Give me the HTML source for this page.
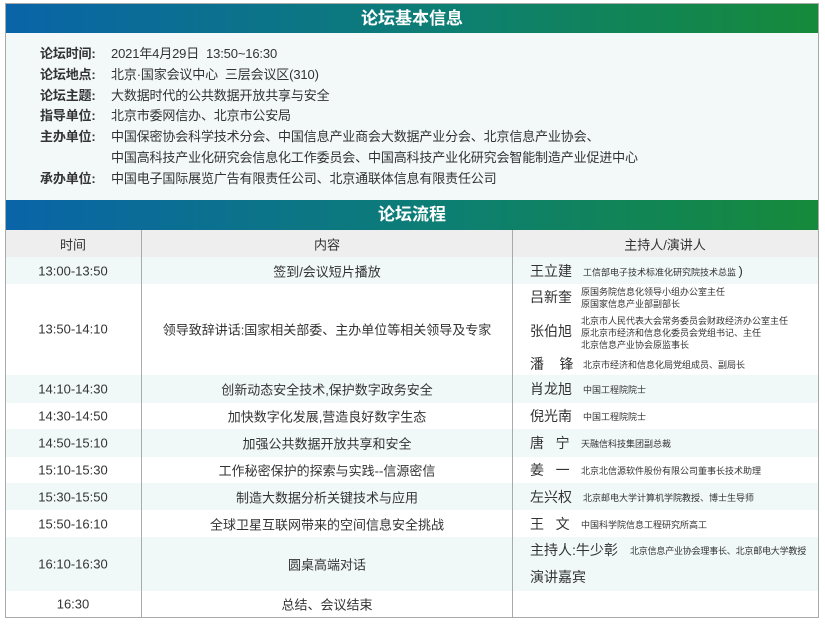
<!DOCTYPE html>
<html><head><meta charset="utf-8"><style>
*{margin:0;padding:0;box-sizing:border-box}
body{width:825px;height:626px;background:#fff;font-family:"Liberation Sans","Noto Sans CJK SC",sans-serif;color:#333;position:relative;overflow:hidden}
.frame{position:absolute;left:5px;top:3px;width:814px;height:615px;border:1px solid #aaa;background:#fff}
.bar{position:absolute;left:6px;width:812px;background:linear-gradient(90deg,#0a64a8,#0d7f72 55%,#168a3a);color:#fff;font-weight:bold;font-size:17px;text-align:center}
.info{position:absolute;left:6px;top:33px;width:812px;height:167px;background:#f3f9f9}
.l{position:absolute;font-size:13px;white-space:nowrap;letter-spacing:-0.15px}
.lb{font-weight:bold;left:40px}
.v{left:111px}
.row{position:absolute;left:6px;width:812px}
.a{background:#f1f8f8}
.c{position:absolute;font-size:13px;white-space:nowrap;transform:translate(-50%,-50%)}
.vl{position:absolute;top:230px;height:387px;width:1px;background:#aaa}
.n{position:absolute;left:530px;font-size:14px;white-space:nowrap;transform:translateY(-50%)}
.d{position:absolute;font-size:9px;white-space:nowrap;transform:translateY(-50%);line-height:12px}
</style></head><body>
<div class="frame"></div>
<div class="bar" style="top:4px;height:29px;line-height:29px">论坛基本信息</div>
<div class="info"></div>
<div class="l lb" style="top:43px">论坛时间:</div><div class="l v" style="top:43px">2021年4月29日&nbsp; 13:50~16:30</div>
<div class="l lb" style="top:64px">论坛地点:</div><div class="l v" style="top:64px">北京·国家会议中心&nbsp; 三层会议区(310)</div>
<div class="l lb" style="top:85px">论坛主题:</div><div class="l v" style="top:85px">大数据时代的公共数据开放共享与安全</div>
<div class="l lb" style="top:105px">指导单位:</div><div class="l v" style="top:105px">北京市委网信办、北京市公安局</div>
<div class="l lb" style="top:126px">主办单位:</div><div class="l v" style="top:126px">中国保密协会科学技术分会、中国信息产业商会大数据产业分会、北京信息产业协会、</div>
<div class="l v" style="top:147px">中国高科技产业化研究会信息化工作委员会、中国高科技产业化研究会智能制造产业促进中心</div>
<div class="l lb" style="top:168px">承办单位:</div><div class="l v" style="top:168px">中国电子国际展览广告有限责任公司、北京通联体信息有限责任公司</div>
<div class="bar" style="top:200px;height:30px;line-height:30px">论坛流程</div>
<div class="row" style="top:230px;height:27px;background:#eee"></div>
<div class="row a" style="top:257px;height:27px"></div>
<div class="row a" style="top:375px;height:28px"></div>
<div class="row a" style="top:429px;height:28px"></div>
<div class="row a" style="top:483px;height:27px"></div>
<div class="row a" style="top:537px;height:54px"></div>
<div class="vl" style="left:141px"></div><div class="vl" style="left:512px"></div>

<div class="c" style="left:73px;top:244px">时间</div><div class="c" style="left:327px;top:244px">内容</div><div class="c" style="left:665px;top:244px">主持人/演讲人</div>
<div class="c" style="left:73px;top:271px">13:00-13:50</div><div class="c" style="left:327px;top:271px">签到/会议短片播放</div>
<div class="c" style="left:73px;top:329px">13:50-14:10</div><div class="c" style="left:327px;top:329px">领导致辞讲话:国家相关部委、主办单位等相关领导及专家</div>
<div class="c" style="left:73px;top:389px">14:10-14:30</div><div class="c" style="left:327px;top:389px">创新动态安全技术,保护数字政务安全</div>
<div class="c" style="left:73px;top:416px">14:30-14:50</div><div class="c" style="left:327px;top:416px">加快数字化发展,营造良好数字生态</div>
<div class="c" style="left:73px;top:443px">14:50-15:10</div><div class="c" style="left:327px;top:443px">加强公共数据开放共享和安全</div>
<div class="c" style="left:73px;top:470px">15:10-15:30</div><div class="c" style="left:327px;top:470px">工作秘密保护的探索与实践--信源密信</div>
<div class="c" style="left:73px;top:497px">15:30-15:50</div><div class="c" style="left:327px;top:497px">制造大数据分析关键技术与应用</div>
<div class="c" style="left:73px;top:524px">15:50-16:10</div><div class="c" style="left:327px;top:524px">全球卫星互联网带来的空间信息安全挑战</div>
<div class="c" style="left:73px;top:564px">16:10-16:30</div><div class="c" style="left:327px;top:564px">圆桌高端对话</div>
<div class="c" style="left:73px;top:604px">16:30</div><div class="c" style="left:327px;top:604px">总结、会议结束</div>

<div class="n" style="top:271px">王立建</div><div class="d" style="left:583px;top:272px">工信部电子技术标准化研究院技术总监 <span style="font-size:13px">)</span></div>
<div class="n" style="top:297px">吕新奎</div><div class="d" style="left:581px;top:298px">原国务院信息化领导小组办公室主任<br>原国家信息产业部副部长</div>
<div class="n" style="top:331px">张伯旭</div><div class="d" style="left:581px;top:333px">北京市人民代表大会常务委员会财政经济办公室主任<br>原北京市经济和信息化委员会党组书记、主任<br>北京信息产业协会原监事长</div>
<div class="n" style="top:364px">潘&nbsp;&nbsp;&nbsp;&nbsp;锋</div><div class="d" style="left:583px;top:365px">北京市经济和信息化局党组成员、副局长</div>
<div class="n" style="top:389px">肖龙旭</div><div class="d" style="left:583px;top:390px">中国工程院院士</div>
<div class="n" style="top:416px">倪光南</div><div class="d" style="left:583px;top:417px">中国工程院院士</div>
<div class="n" style="top:443px">唐&nbsp;&nbsp;&nbsp;宁</div><div class="d" style="left:581px;top:444px">天融信科技集团副总裁</div>
<div class="n" style="top:470px">姜&nbsp;&nbsp;&nbsp;一</div><div class="d" style="left:581px;top:471px">北京北信源软件股份有限公司董事长技术助理</div>
<div class="n" style="top:497px">左兴权</div><div class="d" style="left:583px;top:498px">北京邮电大学计算机学院教授、博士生导师</div>
<div class="n" style="top:524px">王&nbsp;&nbsp;&nbsp;文</div><div class="d" style="left:581px;top:525px">中国科学院信息工程研究所高工</div>
<div class="n" style="top:550px">主持人:牛少彰</div><div class="d" style="left:630px;top:551px;letter-spacing:-0.2px">北京信息产业协会理事长、北京邮电大学教授</div>
<div class="n" style="top:577px">演讲嘉宾</div>
</body></html>
